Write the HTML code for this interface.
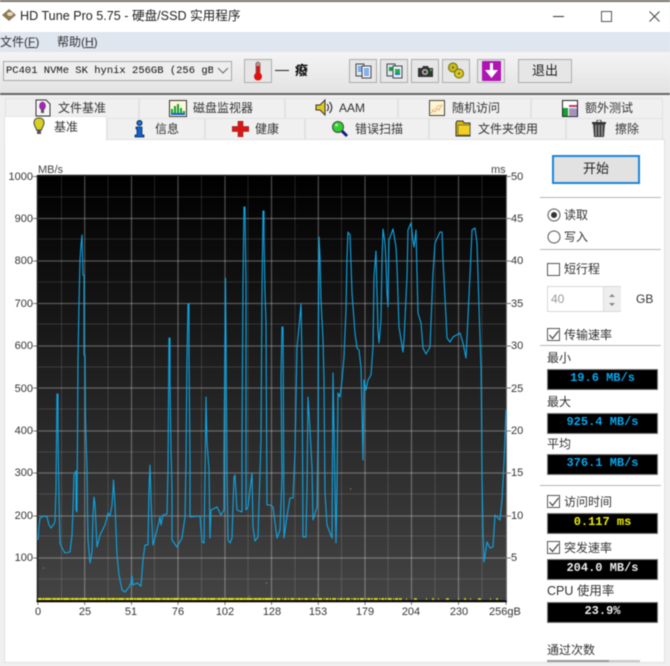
<!DOCTYPE html>
<html><head><meta charset="utf-8"><style>
html,body{margin:0;padding:0;width:670px;height:666px;overflow:hidden;background:#f0f0f0}
#w{position:relative;width:670px;height:666px;overflow:hidden;font-family:"Liberation Sans","Noto Sans CJK SC",sans-serif;font-size:12px;color:#333;filter:blur(.5px)}
.a,.t,.b,svg.i{position:absolute}
.t{line-height:16px;white-space:nowrap}
.b{box-sizing:border-box;border:1px solid #adadad;background:#e6e6e6}
.tab{position:absolute;box-sizing:border-box;background:#f0f0f0;border:1px solid #e2e2e2;border-bottom:none}
.v{position:absolute;left:547px;width:111px;height:21px;background:#000;border:1px solid #777;box-sizing:border-box;font:bold 12px/16px "Liberation Mono",monospace;text-align:center;color:#08a8ee}
.cb{position:absolute;left:547px;width:13px;height:13px;box-sizing:border-box;border:1px solid #555;background:#fff}
.sep{position:absolute;left:540px;width:121px;height:1px;background:#b5b5b5}
.l{text-align:right;width:30px;left:3px;color:#333;font-size:11px}
.r{left:511px;color:#333;font-size:11px}
.x{width:40px;text-align:center;top:604px;color:#333;font-size:11px}
</style></head><body><div id="w">
<div class="a" style="left:0;top:0;width:670px;height:3px;background:#77756a"></div>
<div class="a" style="left:0;top:2px;width:670px;height:30px;background:#fff"></div>
<svg class="i" style="left:2px;top:8px" width="14" height="14" viewBox="0 0 14 14"><path d="M7 1L14 7L7 13L0 7Z" fill="#8a7a55"/><ellipse cx="8" cy="6" rx="3" ry="2" fill="#e6dcc0"/></svg>
<div class="t" style="left:20px;top:8px;font-size:12.6px;color:#222">HD Tune Pro 5.75 - 硬盘/SSD 实用程序</div>
<svg class="i" style="left:550px;top:8px" width="115" height="16" viewBox="0 0 115 16" fill="none" stroke="#333"><path d="M3 8.500H14"/><rect x="51.500" y="3.500" width="10" height="10" stroke="#555"/><path d="M99.500 3.500L109.500 13.500M109.500 3.500L99.500 13.500" stroke="#444"/></svg>

<div class="a" style="left:0;top:32px;width:670px;height:20px;background:#dfe6ef"></div>
<div class="t" style="left:0;top:34px;color:#333">文件(<u>F</u>)</div>
<div class="t" style="left:57px;top:34px;color:#333">帮助(<u>H</u>)</div>

<div class="a" style="left:0;top:52px;width:670px;height:41px;background:linear-gradient(#f4f4f4,#e3e3e3)"></div>
<div class="a" style="left:0;top:93px;width:670px;height:2px;background:#666"></div>
<div class="a" style="left:3px;top:61px;width:229px;height:20px;box-sizing:border-box;border:1px solid #a8a8a8;background:#eee"></div>
<div class="t" style="left:6px;top:63px;font:10.5px/16px 'Liberation Mono',monospace;color:#111;width:207px;overflow:hidden">PC401 NVMe SK hynix 256GB (256 gB)</div>
<svg class="i" style="left:217px;top:67px" width="12" height="8"><path d="M1 1L6 6L11 1" fill="none" stroke="#666"/></svg>

<div class="b" style="left:244px;top:59px;width:28px;height:24px"></div>
<svg class="i" style="left:252px;top:61px" width="12" height="20" viewBox="0 0 12 20"><rect x="4" y="1" width="4" height="13" rx="2" fill="#c89088" stroke="#444" stroke-width=".6"/><rect x="4.500" y="5" width="3" height="10" fill="#e01010"/><circle cx="6" cy="15.500" r="4" fill="#e01010"/></svg>
<div class="a" style="left:275px;top:70px;width:14px;height:1px;background:#222"></div>
<div class="t" style="left:295px;top:63px;font-size:13px;color:#000;font-weight:bold">癈</div>

<div class="b" style="left:349px;top:59px;width:28px;height:24px"></div>
<div class="b" style="left:380px;top:59px;width:28px;height:24px"></div>
<div class="b" style="left:411px;top:59px;width:28px;height:24px"></div>
<div class="b" style="left:442px;top:59px;width:28px;height:24px"></div>
<div class="b" style="left:477px;top:59px;width:28px;height:24px"></div>
<div class="b" style="left:518px;top:59px;width:54px;height:24px"></div>
<div class="t" style="left:532px;top:63px;font-size:13px;color:#222">退出</div>
<svg class="i" style="left:355px;top:63px" width="17" height="16" viewBox="0 0 17 16"><rect x="1" y="1" width="8" height="12" fill="#dde7f0" stroke="#444"/><rect x="7" y="3" width="9" height="12" fill="#eef" stroke="#444"/><path d="M9 6h5M9 8h5M9 10h5M9 12h5M3 4h4M3 6h4M3 8h4" stroke="#1878d8"/></svg>
<svg class="i" style="left:386px;top:63px" width="17" height="16" viewBox="0 0 17 16"><rect x="1" y="1" width="8" height="12" fill="#dde7f0" stroke="#444"/><rect x="7" y="3" width="9" height="12" fill="#eef" stroke="#444"/><rect x="3" y="4" width="4" height="4" fill="#1a9a3a"/><rect x="9" y="6" width="5" height="4" fill="#22b040"/><rect x="9" y="10" width="5" height="2" fill="#1878d8"/></svg>
<svg class="i" style="left:417px;top:64px" width="17" height="14" viewBox="0 0 17 14"><path d="M1 4h4l1-2h5l1 2h4v9H1z" fill="#333"/><circle cx="8" cy="8" r="3" fill="#bbb"/><circle cx="8" cy="8" r="1.500" fill="#333"/><rect x="13" y="5" width="2" height="2" fill="#2c2"/></svg>
<svg class="i" style="left:447px;top:62px" width="18" height="17" viewBox="0 0 18 17"><circle cx="6" cy="5.500" r="4.500" fill="#c8bc18" stroke="#6c6410"/><circle cx="12" cy="11.500" r="4.500" fill="#d8c820" stroke="#6c6410"/><circle cx="6" cy="5.500" r="1" fill="#554"/><circle cx="12" cy="11.500" r="1" fill="#554"/></svg>
<svg class="i" style="left:482px;top:61px" width="19" height="20" viewBox="0 0 19 20"><rect width="19" height="20" rx="1" fill="#b014b4"/><path d="M8 2H11V9H16L9.500 17L3 9H8Z" fill="#fff"/></svg>

<!-- tabs -->
<div class="a" style="left:0;top:95px;width:670px;height:571px;background:#f0f0f0"></div>
<div class="tab" style="left:5px;top:98px;width:134px;height:21px"></div>
<div class="tab" style="left:139px;top:98px;width:146px;height:21px"></div>
<div class="tab" style="left:285px;top:98px;width:113px;height:21px"></div>
<div class="tab" style="left:398px;top:98px;width:133px;height:21px"></div>
<div class="tab" style="left:531px;top:98px;width:132px;height:21px"></div>
<div class="tab" style="left:107px;top:118px;width:98px;height:21px"></div>
<div class="tab" style="left:205px;top:118px;width:100px;height:21px"></div>
<div class="tab" style="left:305px;top:118px;width:124px;height:21px"></div>
<div class="tab" style="left:429px;top:118px;width:137px;height:21px"></div>
<div class="tab" style="left:566px;top:118px;width:97px;height:21px"></div>
<div class="a" style="left:4px;top:139px;width:661px;height:524px;background:#fff;border:1px solid #e0e0e0;box-sizing:border-box"></div>
<div class="a" style="left:4px;top:116px;width:103px;height:25px;background:#fff;border:1px solid #e4e4e4;border-bottom:none;box-sizing:border-box"></div>

<div class="t" style="left:58px;top:100px">文件基准</div>
<div class="t" style="left:193px;top:100px">磁盘监视器</div>
<div class="t" style="left:339px;top:100px">AAM</div>
<div class="t" style="left:452px;top:100px">随机访问</div>
<div class="t" style="left:585px;top:100px">额外测试</div>
<div class="t" style="left:54px;top:119px">基准</div>
<div class="t" style="left:155px;top:121px">信息</div>
<div class="t" style="left:255px;top:121px">健康</div>
<div class="t" style="left:355px;top:121px">错误扫描</div>
<div class="t" style="left:478px;top:121px">文件夹使用</div>
<div class="t" style="left:615px;top:121px">擦除</div>

<svg class="i" style="left:35px;top:99px" width="16" height="18" viewBox="0 0 16 18"><path d="M1 1H11L15 5V17H1Z" fill="#f4f4f4" stroke="#333"/><ellipse cx="7.500" cy="7" rx="3" ry="4" fill="#b020c0" stroke="#333" stroke-width=".5"/><rect x="6" y="11" width="3" height="3" fill="#555"/></svg>
<svg class="i" style="left:169px;top:100px" width="18" height="17" viewBox="0 0 18 17"><rect x=".5" y=".5" width="17" height="16" fill="#fdf8d8" stroke="#333"/><path d="M2 15V9H4V15ZM5 15V6H7V15ZM8 15V4H10V15ZM11 15V8H13V15ZM14 15V11H16V15Z" fill="#13a030"/><path d="M2 15H16V13H2Z" fill="#1060d0"/></svg>
<svg class="i" style="left:315px;top:99px" width="20" height="17" viewBox="0 0 20 17"><path d="M1 6H5L10 1V16L5 11H1Z" fill="#e0c820" stroke="#333"/><path d="M12 5Q15 8.500 12 12M14.500 3Q19 8.500 14.500 14" fill="none" stroke="#333" stroke-width="1.200"/></svg>
<svg class="i" style="left:429px;top:100px" width="16" height="16" viewBox="0 0 16 16"><rect x=".5" y=".5" width="15" height="15" fill="#fdf5d0" stroke="#444"/><path d="M2 13l2-2 2 1 2-3 2 1 2-4 2-1" fill="none" stroke="#e06060" stroke-dasharray="1 1"/><path d="M3 10l3-1 3-3 3-1" fill="none" stroke="#d8a020" stroke-dasharray="1 1"/></svg>
<svg class="i" style="left:562px;top:100px" width="16" height="17" viewBox="0 0 16 17"><rect x=".5" y=".5" width="15" height="16" fill="#fff" stroke="#222"/><rect x="1" y="8" width="5" height="8" fill="#13a030"/><rect x="7" y="5" width="8" height="2" fill="#d03060"/><rect x="7" y="8" width="8" height="8" fill="#9ab0d8"/><path d="M7 10h8M7 12h8M7 14h8" stroke="#d03060" stroke-width=".6"/></svg>
<svg class="i" style="left:33px;top:117px" width="12" height="19" viewBox="0 0 12 19"><path d="M6 1C10 1 11 3 11 6C11 9 8.500 11 8.500 13H3.500C3.500 11 1 9 1 6C1 3 2 1 6 1Z" fill="#d8d020" stroke="#444"/><rect x="4" y="13" width="4" height="4" fill="#555"/></svg>
<svg class="i" style="left:134px;top:120px" width="11" height="18" viewBox="0 0 11 18"><circle cx="5.500" cy="3" r="2.500" fill="#1878d8" stroke="#024"/><path d="M2 7H8V15H10V17H1V15H3V9H2Z" fill="#1060d0" stroke="#024" stroke-width=".7"/></svg>
<svg class="i" style="left:232px;top:121px" width="17" height="16" viewBox="0 0 17 16"><path d="M6 0H11V5.500H17V10.500H11V16H6V10.500H0V5.500H6Z" fill="#d81818" stroke="#801010" stroke-width=".5"/></svg>
<svg class="i" style="left:331px;top:120px" width="18" height="18" viewBox="0 0 18 18"><path d="M10 10L16 16" stroke="#102080" stroke-width="3"/><circle cx="7" cy="7" r="5.500" fill="#30d030" stroke="#444"/><circle cx="5.500" cy="5" r="1.500" fill="#a0f0a0"/></svg>
<svg class="i" style="left:455px;top:120px" width="17" height="17" viewBox="0 0 17 17"><path d="M1 3L2 1H8L9 3H15V16H1Z" fill="#d8b810" stroke="#333"/><rect x="3" y="5" width="12" height="10" fill="#f0d020" stroke="#444" stroke-width=".6"/></svg>
<svg class="i" style="left:591px;top:120px" width="16" height="17" viewBox="0 0 16 17"><rect x="1" y="2" width="14" height="2" fill="#333"/><path d="M6 2V0H10V2" fill="none" stroke="#333"/><path d="M2 4H14L13 17H3Z" fill="#444"/><path d="M5 5V16M8 5V16M11 5V16" stroke="#aaa"/></svg>

<!-- chart -->
<svg class="i" style="left:30px;top:170px" width="485" height="436" viewBox="30 170 485 436">
<defs><linearGradient id="g" x1="0" y1="0" x2="0" y2="1"><stop offset="0" stop-color="#000"/><stop offset="1" stop-color="#444"/></linearGradient></defs>
<rect x="37" y="176" width="470" height="425" fill="url(#g)"/>
<g stroke="#fff" stroke-opacity=".13" stroke-width="1">
<path d="M38 197H506M38 239H506M38 282H506M38 324H506M38 367H506M38 409H506M38 452H506M38 494H506M38 536H506M38 579H506"/>
<path d="M61.500 176V600M108 176V600M154.500 176V600M201.500 176V600M248 176V600M295 176V600M341.500 176V600M388 176V600M435 176V600M482 176V600"/>
</g>
<g stroke="#fff" stroke-opacity=".3" stroke-width="1.200">
<path d="M38 218.500H506M38 261H506M38 303.500H506M38 346H506M38 388H506M38 431H506M38 473H506M38 516H506M38 558H506"/>
<path d="M84.700 176V600M131.500 176V600M178 176V600M225 176V600M271.500 176V600M318.300 176V600M365 176V600M411.500 176V600M458.500 176V600"/>
</g>
<path d="M33 176.500H37M33 218.500H37M33 261H37M33 303.500H37M33 346H37M33 388H37M33 431H37M33 473H37M33 516H37M33 558H37M507 176.500H511M507 218.500H511M507 261H511M507 303.500H511M507 346H511M507 388H511M507 431H511M507 473H511M507 516H511M507 558H511M38 602V605M84.700 602V605M131.500 602V605M178 602V605M225 602V605M271.500 602V605M318.300 602V605M365 602V605M411.500 602V605M458.500 602V605M506 602V605" stroke="#777" fill="none"/>
<path d="M38 175.500H507M37.500 175V602" stroke="#1c1c1c" stroke-width="1.500" fill="none"/>
<path d="M36.500 601.300H507" stroke="#000" stroke-width="2" fill="none"/>
<path d="M506.500 176V601" stroke="#777"/>
<polyline fill="none" stroke="#0ca6e6" stroke-width="1.100" stroke-linejoin="round" points="38,540 39,525 40,518 44,516 47,517 49,525 51,528 54,524 55,521 56,490 57,394 58,394 58,430 59,500 60,543 62,548 65,553 70,552 72,535 73,510 74,475 76,471 76,510 77,512 78,360 79,304 80,260 81,245 82,235 83,275 84,275 84,355 85,355 85.500,420 87,470 87.500,512 88,540 90,563 92,552 93,515 94,497 95,505 96,525 97,547 100,535 105,525 108,513 110,516 112,505 113,490 113.500,480 115,505 116,530 117,555 119,575 122,590 125,592 129,587 131,583 132,576 133,585 137,583 141,586 143,560 145,545 148,545 149,490 150,465 151,500 152,525 153,545 157,530 160,517 161,525 163,515 167,514 168,470 169,338 170,338 170,383 171,450 172,490 172,540 177,547 182,538 185,517 186,463 187,358 188,304 189,304 189,358 190,462 190,517 200,516 202,542 204,543 205,477 206,397 207,443 209,469 210,538 211,510 217,507 221,515 224,510 224,453 225.500,278 226,340 227,477 228,540 230,543 232,538 234,477 235,475 237,510 242,512 242,443 243,285 244,207 245,207 246,283 246,443 246,510 248,507 250,490 252,473 253,527 255,541 258,537 261,440 262,290 263,211 264,211 264,240 265,293 266,322 267,505 270,505 273,507 277,538 280,530 282,477 281,377 282,327 283,327 284,538 287,516 290,498 293,498 295,453 297,347 299,327 301,304 302,363 303,537 306,537 307,490 308,397 310,430 312,468 313,520 317,507 318,437 319,237 320,257 321,300 323,340 324,380 325,493 327,525 332,538 333,373 336,543 337,490 338,393 340,397 342,380 344,357 346,310 347,257 348,232 350,235 352,293 355,333 357,348 359,350 361,367 362,410 363,460 364,380 366,390 368,380 371,375 373,347 374,277 376,251 377,293 378,330 379,343 381,320 382,260 383,229 385,243 386,263 387,293 388,307 389,240 393,229 396,247 397,267 399,327 403,352 404,340 407,277 408,230 411,223 413,240 414,247 416,230 417,273 418,313 421,323 423,348 426,354 430,347 433,273 435,243 440,232 442,232 443,260 446,317 447,338 450,342 453,337 460,333 463,343 466,358 468,317 471,253 472,230 475,228 477,243 479,307 481,367 481.500,410 482,477 483,533 484,562 487,542 490,548 493,547 495,515 500,520 502,500 504,463 506,410"/>
<path d="M38 599H270" stroke="#e8e810" stroke-width="2" stroke-dasharray="4 .5 2 .4 6 .6 1 .4 3 .4"/>
<path d="M270 599H400" stroke="#e8e810" stroke-width="1.800" stroke-dasharray="3 .9 1.500 1.100 4 1.400 1 1"/>
<path d="M400 599H500" stroke="#dcdc10" stroke-width="1.500" stroke-dasharray="2 4 1 7 3 9 1 5"/>
<path d="M43 568h1M266 583h1M249 596h1M350 489h1M317 595h1" stroke="#a8a820" stroke-width="1"/>
</svg>
<div class="t" style="left:38px;top:162px;font-size:11px;color:#444">MB/s</div>
<div class="t" style="left:491px;top:162px;font-size:11px;color:#444">ms</div>
<div class="t l" style="top:169px">1000</div><div class="t l" style="top:211px">900</div><div class="t l" style="top:253px">800</div><div class="t l" style="top:296px">700</div><div class="t l" style="top:338px">600</div><div class="t l" style="top:381px">500</div><div class="t l" style="top:423px">400</div><div class="t l" style="top:465px">300</div><div class="t l" style="top:508px">200</div><div class="t l" style="top:550px">100</div>
<div class="t r" style="top:169px">50</div><div class="t r" style="top:211px">45</div><div class="t r" style="top:253px">40</div><div class="t r" style="top:296px">35</div><div class="t r" style="top:338px">30</div><div class="t r" style="top:381px">25</div><div class="t r" style="top:423px">20</div><div class="t r" style="top:465px">15</div><div class="t r" style="top:508px">10</div><div class="t r" style="left:511px;top:550px">5</div>
<div class="t x" style="left:18px">0</div><div class="t x" style="left:65px">25</div><div class="t x" style="left:111px">51</div><div class="t x" style="left:158px">76</div><div class="t x" style="left:205px">102</div><div class="t x" style="left:252px">128</div><div class="t x" style="left:298px">153</div><div class="t x" style="left:345px">179</div><div class="t x" style="left:391px">204</div><div class="t x" style="left:439px">230</div><div class="t" style="left:489px;top:604px;color:#333;font-size:11px">256gB</div>

<!-- right panel -->
<div class="a" style="left:552px;top:155px;width:88px;height:29px;box-sizing:border-box;border:2px solid #1b86dc;background:#e2e2e2"></div>
<div class="t" style="left:583px;top:161px;font-size:13px;color:#222">开始</div>
<div class="sep" style="top:197px"></div>
<div class="sep" style="top:249px"></div>
<div class="sep" style="top:345px"></div>
<div class="sep" style="top:485px"></div>
<svg class="i" style="left:547px;top:208px" width="14" height="36" viewBox="0 0 14 36" fill="#fff" stroke="#555"><circle cx="7" cy="7" r="6"/><circle cx="7" cy="7" r="3" fill="#333" stroke="none"/><circle cx="7" cy="29" r="6"/></svg>
<div class="t" style="left:564px;top:207px">读取</div>
<div class="t" style="left:564px;top:229px">写入</div>
<div class="cb" style="top:263px"></div>
<div class="t" style="left:564px;top:261px">短行程</div>
<div class="a" style="left:547px;top:286px;width:74px;height:26px;box-sizing:border-box;border:1px solid #d8d8d8;background:#fff"></div>
<div class="a" style="left:603px;top:287px;width:17px;height:24px;background:#eee;border-left:1px solid #ddd"></div>
<svg class="i" style="left:607px;top:292px" width="10" height="16"><path d="M2 5L5 2L8 5ZM2 11L8 11L5 14Z" fill="#888"/></svg>
<div class="t" style="left:551px;top:291px;color:#999">40</div>
<div class="t" style="left:636px;top:291px">GB</div>
<div class="cb" style="top:328px"></div>
<svg class="i" style="left:548px;top:329px" width="12" height="12"><path d="M1.500 6L4.500 9.500L10.500 2" fill="none" stroke="#444" stroke-width="1.200"/></svg>
<div class="t" style="left:564px;top:327px">传输速率</div>
<div class="t" style="left:547px;top:350px">最小</div>
<div class="v" style="top:369px">19.6 MB/s</div>
<div class="t" style="left:547px;top:394px">最大</div>
<div class="v" style="top:413px">925.4 MB/s</div>
<div class="t" style="left:547px;top:436px">平均</div>
<div class="v" style="top:454px">376.1 MB/s</div>
<div class="cb" style="top:495px"></div>
<svg class="i" style="left:548px;top:496px" width="12" height="12"><path d="M1.500 6L4.500 9.500L10.500 2" fill="none" stroke="#444" stroke-width="1.200"/></svg>
<div class="t" style="left:564px;top:494px">访问时间</div>
<div class="v" style="top:513px;color:#f0f000">0.117 ms</div>
<div class="cb" style="top:541px"></div>
<svg class="i" style="left:548px;top:542px" width="12" height="12"><path d="M1.500 6L4.500 9.500L10.500 2" fill="none" stroke="#444" stroke-width="1.200"/></svg>
<div class="t" style="left:564px;top:540px">突发速率</div>
<div class="v" style="top:559px;color:#eee">204.0 MB/s</div>
<div class="t" style="left:547px;top:583px;font-size:12.500px">CPU 使用率</div>
<div class="v" style="top:602px;color:#eee">23.9%</div>
<div class="t" style="left:547px;top:642px">通过次数</div>
<div class="a" style="left:547px;top:660px;width:93px;height:2px;background:#c8c8c8"></div>
<div class="a" style="left:547px;top:660px;width:62px;height:2px;background:#999"></div>
</div></body></html>
